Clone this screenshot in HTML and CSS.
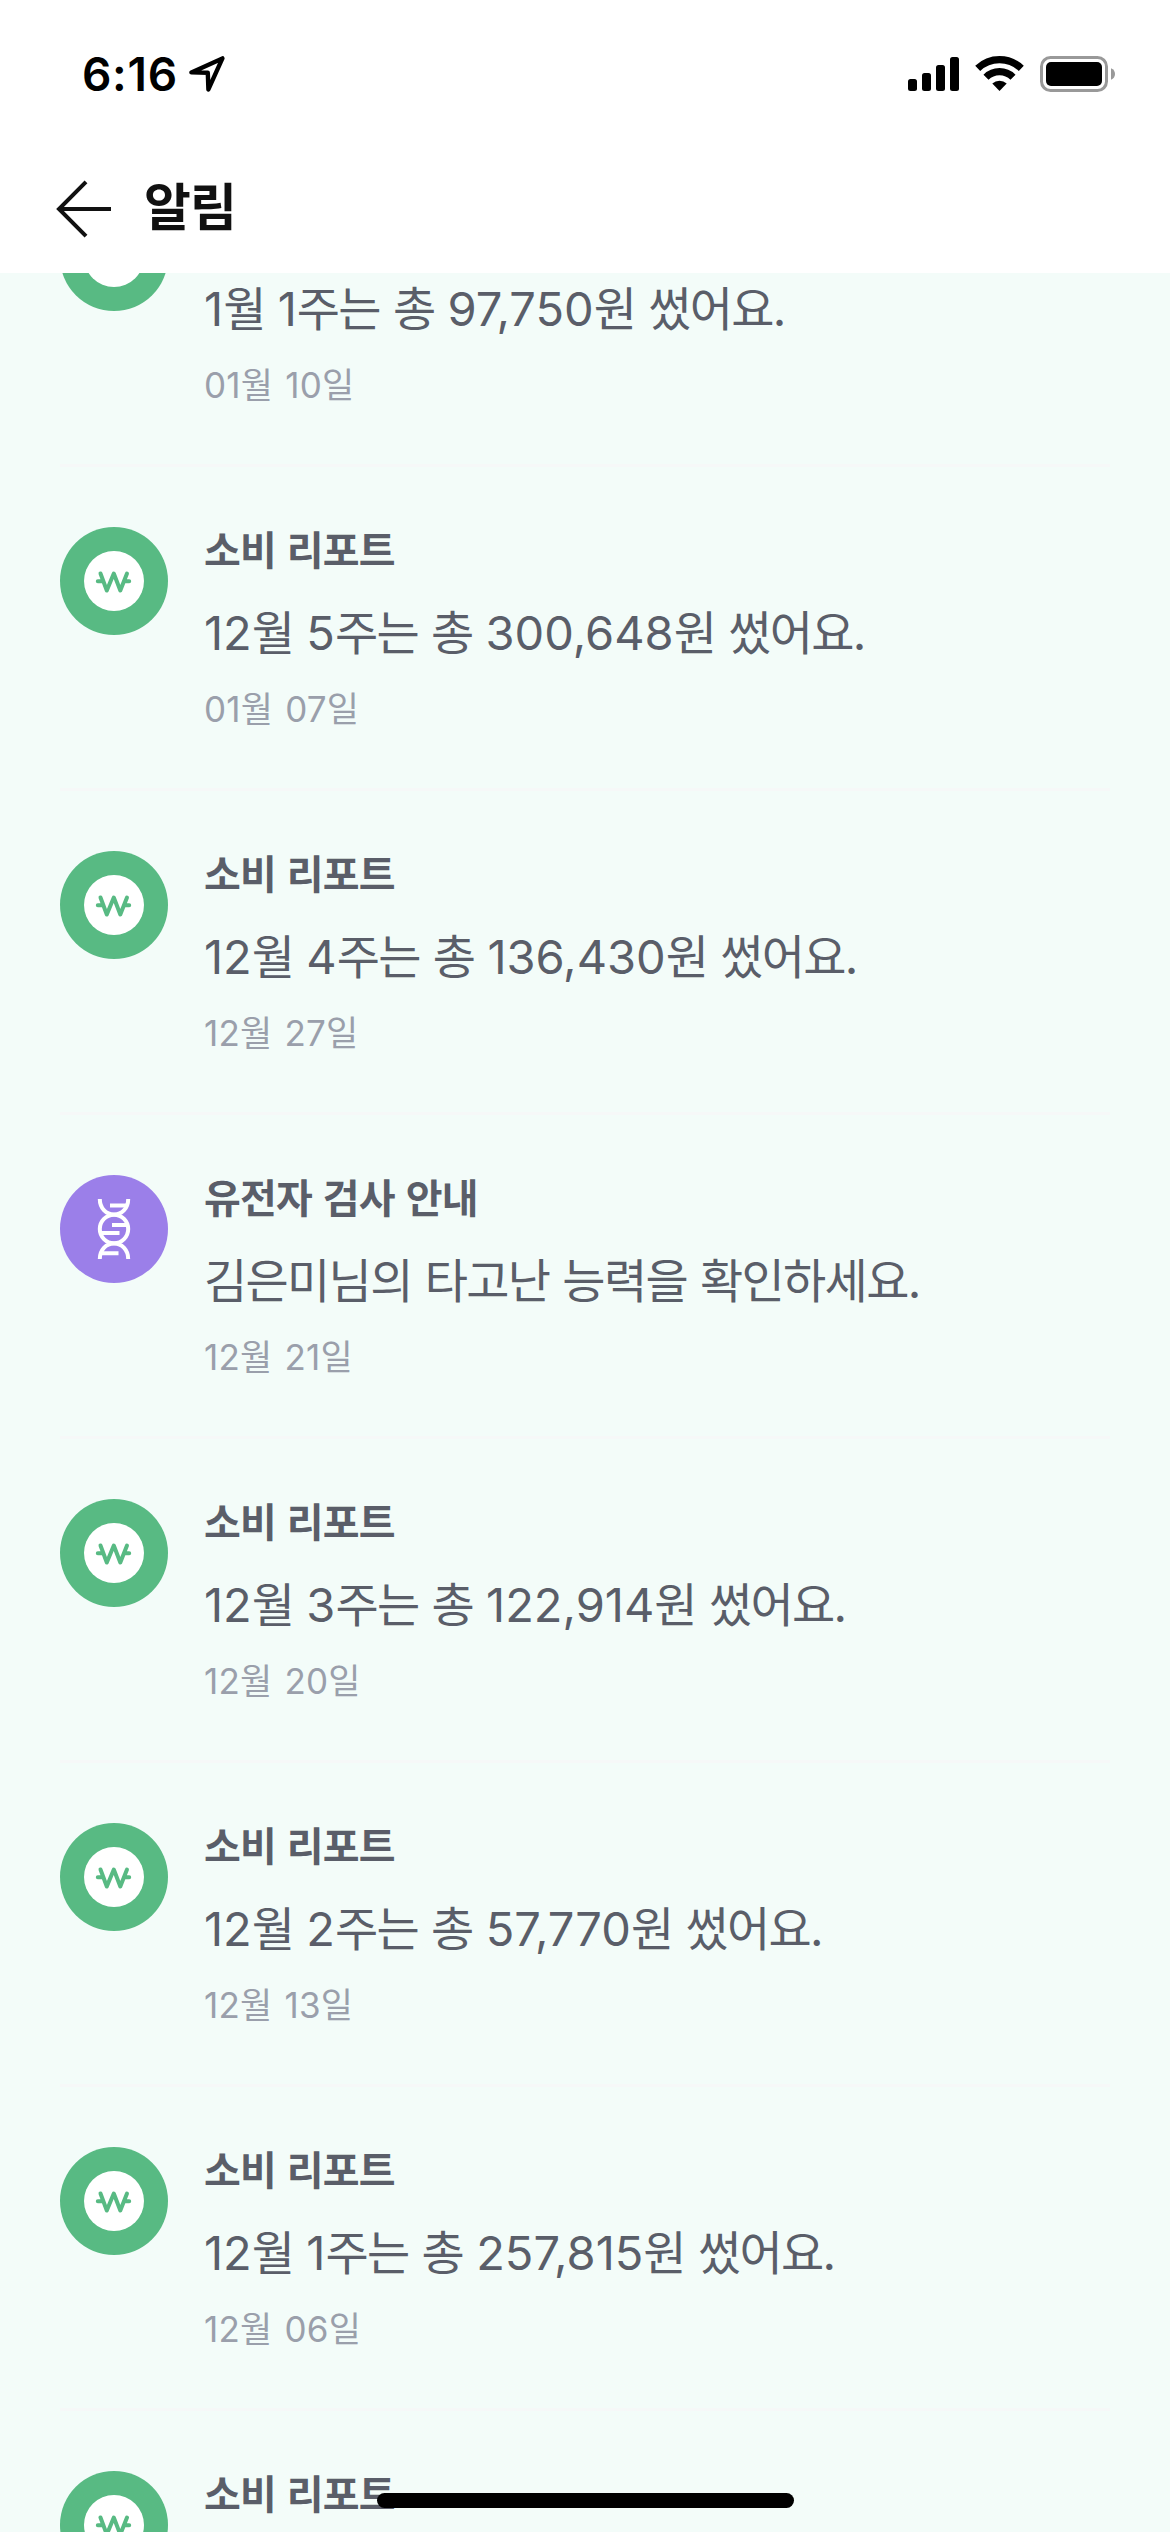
FILE: index.html
```html
<!DOCTYPE html>
<html lang="ko">
<head>
<meta charset="utf-8">
<title>알림</title>
<link rel="stylesheet" href="styles.css">
</head>
<body>
<svg class="defs" width="0" height="0" aria-hidden="true">
  <symbol id="won" viewBox="0 0 108 108">
    <circle cx="54" cy="54" r="54" fill="#58ba83"/>
    <circle cx="54" cy="54" r="30" fill="#fff"/>
    <path d="M40.5 46.5 L46.8 63.5 L53.8 46.5 L60.3 63.5 L67 46.5 M37.8 54.3 H43 M65 54.3 H69.2" fill="none" stroke="#58ba83" stroke-width="4" stroke-linecap="round" stroke-linejoin="round"/>
  </symbol>
  <symbol id="dna" viewBox="0 0 108 108">
    <circle cx="54" cy="54" r="54" fill="#9b7fe9"/>
    <g fill="none" stroke="#fff" stroke-width="4">
      <path d="M39.8 24 C39.8 33 46 39.5 54 39.5 S68.2 33 68.2 24"/>
      <circle cx="54" cy="54" r="14.2"/>
      <path d="M39.8 84 C39.8 75 46 68.5 54 68.5 S68.2 75 68.2 84"/>
      <path d="M50 30.5 H66 M52 50 H67 M41 58 H59.5 M41 78.3 H58.5"/>
    </g>
  </symbol>
</svg>
<div class="screen">
  <header class="top">
    <div class="status">
      <div class="clock">
        <span class="time">6:16</span>
        <svg width="36" height="36" viewBox="0 0 36 36"><path d="M2.4 16.4 L33.4 2.4 L19.4 33.4 L18.8 16.8 Z" fill="none" stroke="#000" stroke-width="4.4" stroke-linejoin="round"/></svg>
      </div>
      <div class="indicators">
        <svg width="51" height="34" viewBox="0 0 51 34"><rect y="22" width="9" height="12" rx="2.5"/><rect x="14" y="16" width="9" height="18" rx="2.5"/><rect x="28" y="8" width="9" height="26" rx="2.5"/><rect x="42" width="9" height="34" rx="2.5"/></svg>
        <svg width="49" height="38" viewBox="0 0 49 38"><g fill="none" stroke="#000" stroke-width="7.2"><path d="M2.7 13.3 A31.5 31.5 0 0 1 46.3 13.3"/><path d="M11 22.2 A19.2 19.2 0 0 1 38 22.2"/></g><path d="M24.5 36 L17.3 28.6 A10.5 10.5 0 0 1 31.7 28.6 Z"/></svg>
        <svg width="75" height="36" viewBox="0 0 75 36"><rect x="1.5" y="1.5" width="65" height="33" rx="9" fill="none" stroke="#999" stroke-width="3"/><rect x="6" y="6" width="56" height="24" rx="5"/><path d="M71 12.2 Q75 14 75 18 T71 23.8 Z" fill="#999"/></svg>
      </div>
    </div>
    <nav class="bar">
      <svg class="back" width="56" height="58" viewBox="0 0 56 58"><path d="M30 1.8 L3 29 L30 56.2 M3 29 H55" fill="none" stroke="#111" stroke-width="4"/></svg>
      <h1 class="heading">알림</h1>
    </nav>
  </header>
  <main class="viewport">
    <ul class="list">
      <li class="item"><svg class="icon"><use href="#won"/></svg><div class="text untitled"><p class="body"><span class="num">1</span>월 <span class="num">1</span>주는 총 <span class="num">97,750</span>원 썼어요.</p><time class="date"><span class="num">01</span>월 <span class="num">10</span>일</time></div></li>
      <li class="item"><svg class="icon"><use href="#won"/></svg><div class="text"><h2 class="title">소비 리포트</h2><p class="body"><span class="num">12</span>월 <span class="num">5</span>주는 총 <span class="num">300,648</span>원 썼어요.</p><time class="date"><span class="num">01</span>월 <span class="num">07</span>일</time></div></li>
      <li class="item"><svg class="icon"><use href="#won"/></svg><div class="text"><h2 class="title">소비 리포트</h2><p class="body"><span class="num">12</span>월 <span class="num">4</span>주는 총 <span class="num">136,430</span>원 썼어요.</p><time class="date"><span class="num">12</span>월 <span class="num">27</span>일</time></div></li>
      <li class="item"><svg class="icon"><use href="#dna"/></svg><div class="text"><h2 class="title">유전자 검사 안내</h2><p class="body">김은미님의 타고난 능력을 확인하세요.</p><time class="date"><span class="num">12</span>월 <span class="num">21</span>일</time></div></li>
      <li class="item"><svg class="icon"><use href="#won"/></svg><div class="text"><h2 class="title">소비 리포트</h2><p class="body"><span class="num">12</span>월 <span class="num">3</span>주는 총 <span class="num">122,914</span>원 썼어요.</p><time class="date"><span class="num">12</span>월 <span class="num">20</span>일</time></div></li>
      <li class="item"><svg class="icon"><use href="#won"/></svg><div class="text"><h2 class="title">소비 리포트</h2><p class="body"><span class="num">12</span>월 <span class="num">2</span>주는 총 <span class="num">57,770</span>원 썼어요.</p><time class="date"><span class="num">12</span>월 <span class="num">13</span>일</time></div></li>
      <li class="item"><svg class="icon"><use href="#won"/></svg><div class="text"><h2 class="title">소비 리포트</h2><p class="body"><span class="num">12</span>월 <span class="num">1</span>주는 총 <span class="num">257,815</span>원 썼어요.</p><time class="date"><span class="num">12</span>월 <span class="num">06</span>일</time></div></li>
      <li class="item"><svg class="icon"><use href="#won"/></svg><div class="text"><h2 class="title">소비 리포트</h2></div></li>
    </ul>
  </main>
  <div class="home"></div>
</div>
</body>
</html>
```
FILE: styles.css
```css
* { box-sizing: border-box; margin: 0; padding: 0; }
body {
  font-family: Inter, "Noto Sans CJK KR", sans-serif;
  background: #f3fcf9;
}
.defs { position: absolute; }
.screen {
  position: relative;
  width: 1170px;
  height: 2532px;
  display: flex;
  flex-direction: column;
  overflow: hidden;
}
.top { flex: none; height: 273px; background: #fff; }
.status {
  height: 148px;
  padding: 0 55px 0 82px;
  display: flex;
  align-items: center;
  justify-content: space-between;
}
.clock { display: flex; align-items: center; gap: 11px; }
.time { font-size: 46px; font-weight: 600; line-height: 56px; letter-spacing: 0.7px; }
.indicators { display: flex; align-items: center; gap: 16px; }
.bar {
  height: 122px;
  padding-left: 56px;
  display: flex;
  align-items: center;
  gap: 32px;
}
.heading {
  margin-bottom: 2px;
  font-size: 51px;
  line-height: 60px;
  font-weight: 700;
  letter-spacing: -1px;
  color: #111;
}
.viewport { flex: 1; min-height: 0; overflow: hidden; }
.list { list-style: none; margin-top: -130px; padding: 0 60px; }
.item {
  height: 324px;
  padding-top: 60px;
  border-bottom: 3px solid #f6f8f8;
  display: flex;
  gap: 36px;
}
.icon { flex: none; width: 108px; height: 108px; }
.text { display: flex; flex-direction: column; white-space: nowrap; }
.untitled { padding-top: 48px; }
.title {
  font-size: 40px;
  line-height: 48px;
  font-weight: 700;
  letter-spacing: -0.8px;
  word-spacing: 2.2px;
  color: #5a5e69;
}
.body {
  margin-top: 26px;
  font-size: 47px;
  line-height: 64px;
  letter-spacing: -1.7px;
  word-spacing: 1.5px;
  color: #5a5e69;
}
.date {
  margin-top: 20px;
  font-size: 35px;
  line-height: 48px;
  letter-spacing: -1.3px;
  word-spacing: 5.2px;
  color: #9a9fab;
}
.num { letter-spacing: 0; }
.date .num { letter-spacing: 0.15px; }
.home {
  position: absolute;
  left: 377px;
  bottom: 24px;
  width: 417px;
  height: 15px;
  border-radius: 8px;
  background: #000;
}
```
